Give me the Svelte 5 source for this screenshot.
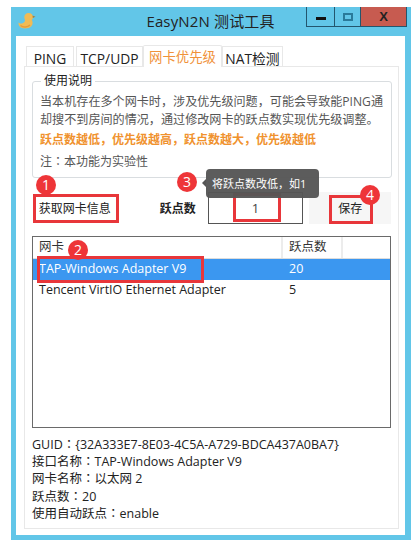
<script>
  const tabs = [
    { label: 'PING', w: 48 },
    { label: 'TCP/UDP', w: 67 },
    { label: '网卡优先级', w: 79, active: true },
    { label: 'NAT检测', w: 61 }
  ];
  const info = [
    ['GUID', '{32A333E7-8E03-4C5A-A729-BDCA437A0BA7}'],
    ['接口名称', 'TAP-Windows Adapter V9'],
    ['网卡名称', '以太网 2'],
    ['跃点数', '20'],
    ['使用自动跃点', 'enable']
  ];
  const marks = [
    { n: 1, cls: 'm1' },
    { n: 2, cls: 'm2' },
    { n: 3, cls: 'm3' },
    { n: 4, cls: 'm4' }
  ];
</script>

<div class="window">
  <header class="titlebar">
    <svg class="duck" width="18" height="18" viewBox="0 0 18 18" aria-hidden="true">
      <path d="M10.500 1c2.800 0 4.500 1.800 4.500 4 0 1.200-.6 2.200-1.200 2.900 1.200 2 1.200 4.500-.5 6.300C11.500 16.200 7 17 4 16 1.800 15.200.2 13.200.5 10.500c1 1 2.200 1.400 3.400 1C5.700 11 7 9.800 7 8.500 7 7.500 6.300 6.500 6.300 5c0-2.300 1.800-4 4.200-4z" fill="#f1bb55"/>
      <path d="M14.500 3.500l3 1.200-2.700 1.300z" fill="#a8803e"/>
      <path d="M2.500 13.500c2.500 2 7 2 9.500-.5" stroke="#e39c3c" stroke-width="1.500" fill="none"/>
    </svg>
    <span class="title">EasyN2N 测试工具</span>
    <div class="controls">
      <button class="ctl"><i class="min"></i></button>
      <button class="ctl"><i class="max"></i></button>
      <button class="ctl close">X</button>
    </div>
  </header>

  <main class="client">
    <nav class="tabs">
      {#each tabs as t}
        <span class="tab" class:active={t.active} style="width:{t.w}px">{t.label}</span>
      {/each}
    </nav>

    <section class="panel">
      <fieldset class="usage">
        <legend>使用说明</legend>
        <p class="desc">当本机存在多个网卡时，涉及优先级问题，可能会导致能PING通<br />却搜不到房间的情况，通过修改网卡的跃点数实现优先级调整。</p>
        <p class="warn">跃点数越低，优先级越高，跃点数越大，优先级越低</p>
        <p class="note">注<span class="colon">：</span>本功能为实验性</p>
      </fieldset>

      <div class="actions">
        <button class="fetch">获取网卡信息</button>
        <span class="hop-label">跃点数</span>
        <div class="hop-input">1</div>
        <button class="save">保存</button>
      </div>

      <div class="list">
        <div class="row head">
          <span class="c1">网卡</span><span class="c2">跃点数</span><span class="c3"></span>
        </div>
        <div class="row selected">
          <span class="c1">TAP-Windows Adapter V9</span><span class="c2">20</span>
        </div>
        <div class="row">
          <span class="c1">Tencent VirtIO Ethernet Adapter</span><span class="c2">5</span>
        </div>
      </div>

      <div class="info">
        {#each info as [k, v]}
          <div class="info-line">{k}<span class="colon">：</span>{v}</div>
        {/each}
      </div>
    </section>
  </main>

  <div class="box b1"></div>
  <div class="box b2"></div>
  <div class="box b3"></div>
  <div class="box b4"></div>
  <div class="tooltip">将跃点数改低，如1</div>
  {#each marks as m}
    <span class="mark {m.cls}">{m.n}</span>
  {/each}
</div>

<style>
  :global(body) {
    margin: 0;
    background: #fff;
  }
  .window {
    position: relative;
    box-sizing: border-box;
    width: 400px;
    height: 533px;
    margin: 7px 0 0 11px;
    background: #62c6e8;
    padding: 0 6px 5px 5px;
    display: flex;
    flex-direction: column;
    font-family: "Open Sans", "Noto Sans CJK SC", sans-serif;
    font-size: 12.500px;
    color: #222;
  }
  .titlebar {
    height: 29px;
    flex: none;
    position: relative;
    display: flex;
    align-items: center;
    justify-content: center;
  }
  .duck {
    position: absolute;
    left: 2px;
    top: 5px;
  }
  .title {
    font-size: 15px;
    line-height: 20px;
    margin-top: -2px;
    color: #222;
    letter-spacing: 0.150px;
  }
  .controls {
    position: absolute;
    right: -2px;
    top: 0;
    display: flex;
    height: 19px;
    border: 1px solid #23566e;
    border-top: 0;
  }
  .ctl {
    box-sizing: border-box;
    height: 19px;
    width: 28px;
    padding: 0;
    border: 0;
    border-right: 1px solid #23566e;
    background: transparent;
    display: flex;
    align-items: center;
    justify-content: center;
  }
  .ctl:nth-child(2) {
    width: 26px;
  }
  .min {
    width: 10px;
    height: 3px;
    background: #111;
    margin-top: 3px;
  }
  .max {
    box-sizing: border-box;
    width: 10px;
    height: 8px;
    border: 2px solid #2a7a9a;
  }
  .close {
    width: 45px;
    border-right: 0;
    background: #c75b50;
    color: #222;
    font: bold 13px "Liberation Sans", sans-serif;
  }
  .client {
    flex: 1;
    background: #fff;
    padding: 10px 6px 6px 8px;
    display: flex;
    flex-direction: column;
    min-height: 0;
  }
  .tabs {
    display: flex;
    height: 20px;
    padding-left: 2px;
    flex: none;
  }
  .tab {
    box-sizing: border-box;
    height: 20px;
    padding-top: 3px;
    border: 1px solid #e8e8e8;
    border-bottom: 0;
    font-size: 13.800px;
    line-height: 17px;
    text-align: center;
    background: #fff;
    color: #222;
    white-space: nowrap;
  }
  .tab:first-child {
    margin-right: 2px;
  }
  .tab.active {
    color: #f0923a;
    font-size: 13.400px;
    margin-top: -1px;
    height: 22px;
    padding-top: 3px;
    z-index: 1;
    border-radius: 2px 2px 0 0;
  }
  .panel {
    flex: 1;
    min-height: 0;
    border: 1px solid #e8e8e8;
    padding: 0 7px;
    display: flex;
    flex-direction: column;
  }
  .usage {
    box-sizing: border-box;
    margin: 7px 0 0;
    padding: 0 8px;
    height: 104px;
    border: 1px solid #d9dde0;
    border-radius: 3px;
    flex: none;
  }
  legend {
    padding: 0 3px;
    font-size: 12px;
    line-height: 14px;
    color: #222;
  }
  p {
    margin: 0;
  }
  .desc,
  .warn,
  .note {
    font-size: 12.100px;
    line-height: 18px;
    margin-left: -1px;
    white-space: nowrap;
  }
  .desc {
    color: #555;
    margin-top: 5px;
  }
  .warn {
    color: #f0922e;
    font-weight: 700;
    font-size: 12px;
    margin-top: 2px;
  }
  .note {
    color: #555;
    margin-top: 3px;
    font-size: 12px;
  }
  .colon {
    font-family: "Noto Sans CJK TC", sans-serif;
  }
  .actions {
    display: flex;
    align-items: center;
    height: 32px;
    margin-top: 14px;
    flex: none;
  }
  button {
    font-family: inherit;
    cursor: default;
  }
  .fetch {
    width: 80px;
    height: 28px;
    padding: 0;
    margin-left: 3px;
    border: 0;
    background: #fff;
    font-size: 12px;
    color: #222;
  }
  .hop-label {
    margin-left: 45px;
    width: 48px;
    font-weight: 700;
    font-size: 12px;
    color: #222;
  }
  .hop-input {
    box-sizing: border-box;
    width: 96px;
    height: 32px;
    border: 1px solid #555;
    text-align: center;
    line-height: 30px;
    font-size: 13px;
    color: #444;
  }
  .save {
    width: 82px;
    height: 32px;
    margin-left: 6px;
    border: 0;
    background: #f6f6f6;
    font-size: 12px;
    color: #222;
    padding: 0;
  }
  .list {
    box-sizing: border-box;
    height: 192px;
    margin-top: 12px;
    border: 1px solid #6a6a6a;
    flex: none;
  }
  .row {
    display: flex;
    height: 21px;
    line-height: 20px;
    font-size: 12.500px;
    color: #222;
  }
  .head {
    height: 22px;
    border-bottom: 1px solid #dcdcdc;
    box-sizing: border-box;
    color: #333;
  }
  .selected {
    background: #3b97f0;
    color: #fff;
  }
  .c1 {
    box-sizing: border-box;
    width: 250px;
    padding-left: 6px;
    white-space: nowrap;
  }
  .c2 {
    box-sizing: border-box;
    width: 60px;
    padding-left: 6px;
  }
  .head .c1,
  .head .c2 {
    border-right: 2px solid #ececec;
  }
  .info {
    margin-top: 7px;
    font-size: 12.500px;
    color: #222;
  }
  .info-line {
    height: 17.200px;
    line-height: 17.200px;
    white-space: nowrap;
  }
  .box {
    position: absolute;
    box-sizing: border-box;
    border: 3px solid #e8363a;
    pointer-events: none;
  }
  .b1 { left: 22px; top: 187px; width: 86px; height: 29px; }
  .b2 { left: 26px; top: 249px; width: 167px; height: 27px; }
  .b3 { left: 222px; top: 186px; width: 48px; height: 29px; }
  .b4 { left: 318px; top: 188px; width: 44px; height: 29px; }
  .tooltip {
    position: absolute;
    left: 195px;
    top: 162px;
    box-sizing: border-box;
    width: 113px;
    height: 29px;
    padding-left: 6px;
    border-radius: 4px;
    background: rgba(85, 85, 85, 0.96);
    color: #fff;
    font-size: 11px;
    line-height: 29px;
    white-space: nowrap;
  }
  .tooltip::before {
    content: "";
    position: absolute;
    left: -4px;
    top: 10px;
    border: 4px solid transparent;
    border-left: 0;
    border-right-color: #555;
  }
  .mark {
    position: absolute;
    width: 20px;
    height: 20px;
    border-radius: 50%;
    background: #ee3538;
    color: #fff;
    font-size: 14px;
    line-height: 20px;
    text-align: center;
  }
  .m1 { left: 25px; top: 168px; }
  .m2 { left: 57px; top: 233px; }
  .m3 { left: 166px; top: 165px; }
  .m4 { left: 349px; top: 178px; }
</style>
